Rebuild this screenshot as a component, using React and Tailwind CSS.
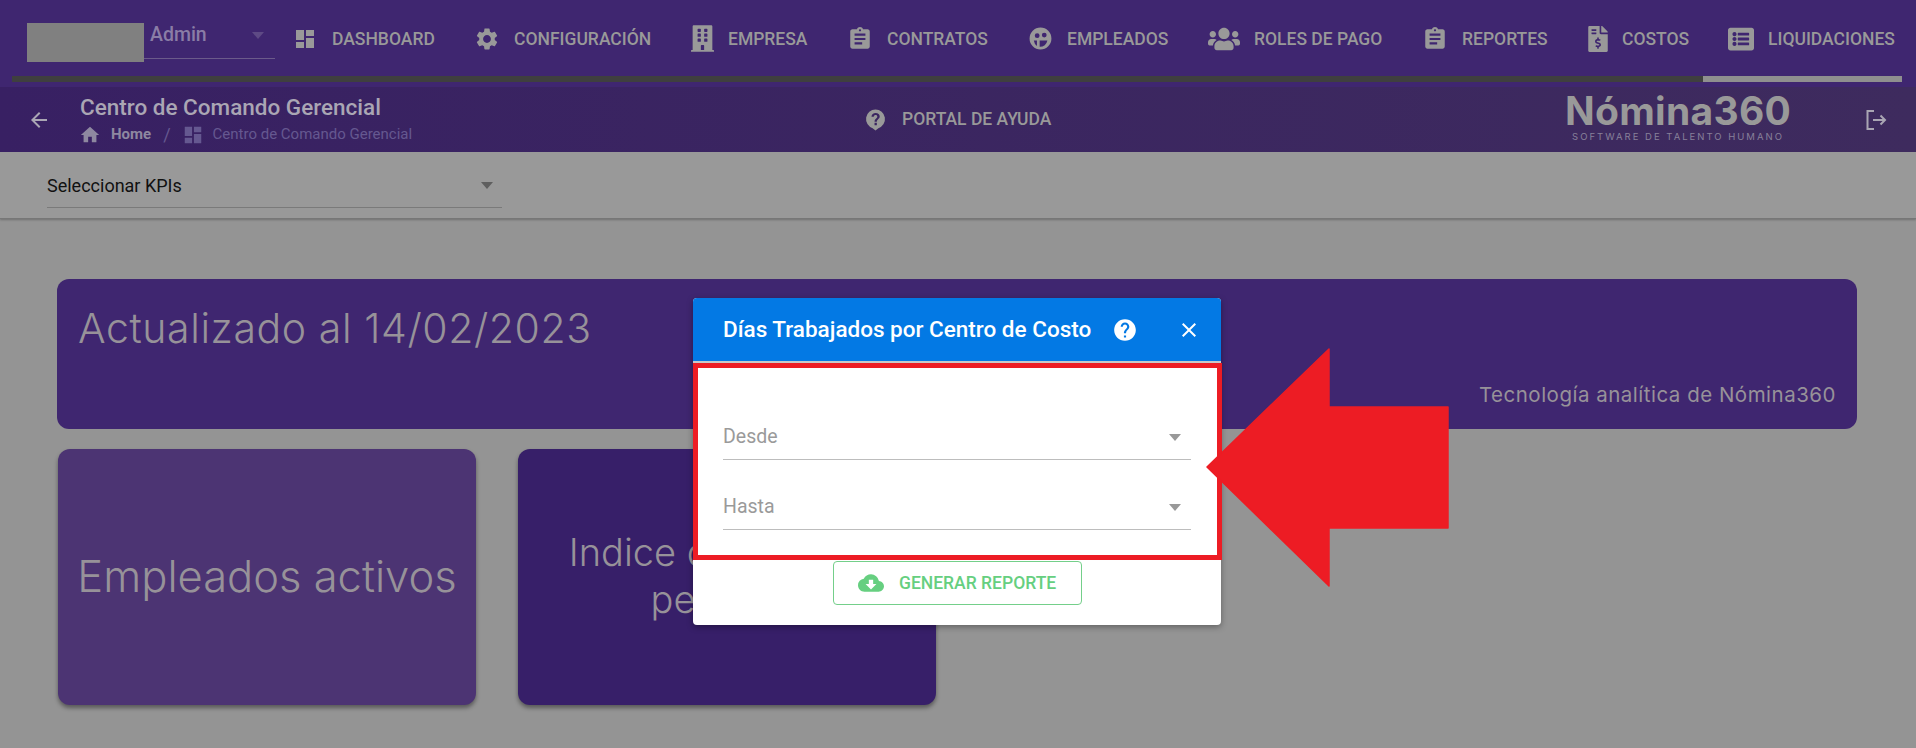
import React from "react";
import { MdDashboard, MdSettings, MdAssignment, MdHome, MdArrowBack, MdClose, MdHelp, MdCloudDownload } from "react-icons/md";
import { FaBuilding, FaUsers, FaFileInvoiceDollar, FaListAlt } from "react-icons/fa";

function FaceIcon({ className }) {
  return (
    <svg viewBox="0 0 24 24" className={className} fill="currentColor">
      <path fillRule="evenodd" d="M12 1.5a10.5 10.5 0 1 0 0 21 10.5 10.5 0 0 0 0-21zM8.8 7a2.3 2.3 0 1 1 0 4.6 2.3 2.3 0 0 1 0-4.6zm6.8-.6a2.3 2.3 0 1 1 0 4.6 2.3 2.3 0 0 1 0-4.6zM5.6 14h3v5.2A7.6 7.6 0 0 1 5.6 14zm5.6 0h7.4a7.2 7.2 0 0 1-7.4 6z" />
    </svg>
  );
}

function HelpBubble({ className }) {
  return (
    <svg viewBox="0 0 24 24" className={className} fill="currentColor">
      <path fillRule="evenodd" d="M12 1.5a10 10 0 0 0-3 19.5l3 2.5 3-2.5a10 10 0 0 0-3-19.5zM11 15.5h2.4v2.4H11zM12.2 5.2c2.4 0 4.2 1.5 4.2 3.7 0 2.6-3 2.9-3 5.4H11c0-3.4 2.9-3.4 2.9-5.3 0-.9-.7-1.6-1.8-1.6-1 0-1.8.7-1.9 1.8H7.8c.1-2.4 1.9-4 4.4-4z" />
    </svg>
  );
}

function SelectArrow({ className }) {
  return <span className={`w-0 h-0 border-x-[6px] border-x-transparent border-t-[7px] ${className}`} />;
}

const tabs = [
  { label: "DASHBOARD", Icon: MdDashboard, box: "w-[180px]", iconBox: "w-[36px]", icon: "w-[24px] h-[24px] -ml-[3px]" },
  { label: "CONFIGURACIÓN", Icon: MdSettings, box: "w-[215px]", iconBox: "w-[38px]", icon: "w-[26px] h-[26px] -ml-[2px]" },
  { label: "EMPRESA", Icon: FaBuilding, box: "w-[159px]", iconBox: "w-[37px]", icon: "w-[23px] h-[27px]" },
  { label: "CONTRATOS", Icon: MdAssignment, box: "w-[179px]", iconBox: "w-[37px]", icon: "w-[26px] h-[26px] -ml-[3px]" },
  { label: "EMPLEADOS", Icon: FaceIcon, box: "w-[179px]", iconBox: "w-[38px]", icon: "w-[25px] h-[25px] -ml-[1px]" },
  { label: "ROLES DE PAGO", Icon: FaUsers, box: "w-[217px]", iconBox: "w-[46px]", icon: "w-[32px] h-[26px]" },
  { label: "REPORTES", Icon: MdAssignment, box: "w-[163px]", iconBox: "w-[37px]", icon: "w-[26px] h-[26px] -ml-[3px]" },
  { label: "COSTOS", Icon: FaFileInvoiceDollar, box: "w-[140px]", iconBox: "w-[34px]", icon: "w-[20px] h-[26px]" },
  { label: "LIQUIDACIONES", Icon: FaListAlt, box: "w-[175px]", iconBox: "w-[40px]", icon: "w-[26px] h-[26px]" },
];

export default function App() {
  return (
    <div className="relative w-[1916px] h-[748px] overflow-hidden bg-[#949494] font-['Roboto',sans-serif]">
      {/* top bar */}
      <header className="h-[87px] bg-[#3f2670] flex flex-col">
        <div className="h-[76px] flex items-start pl-[27px]">
          <div className="w-[117px] h-[39px] mt-[23px] bg-[#808080] shrink-0" />
          <div className="w-[131px] h-[36px] mt-[23px] border-b border-[#6b5a8a] flex items-start justify-between pl-[6px] pr-[11px] shrink-0">
            <span className="text-[19.5px] leading-[24px] font-medium text-[#8a7da6]">Admin</span>
            <SelectArrow className="mt-[9px] border-t-[#5e4a85]" />
          </div>
          <nav className="flex items-center h-[76px] ml-[21px] pt-[1px]">
            {tabs.map(({ label, Icon, box, iconBox, icon }) => (
              <div key={label} className={`${box} flex items-center shrink-0 text-[#999999]`}>
                <span className={`${iconBox} flex items-center shrink-0`}>
                  <Icon className={icon} />
                </span>
                <span className="text-[17.5px] leading-[20px] font-medium whitespace-nowrap">{label}</span>
              </div>
            ))}
          </nav>
        </div>
        <div className="h-[6px] ml-[12px] mr-[14px] bg-[#3f3f3f] flex justify-end">
          <div className="w-[199px] h-[6px] bg-[#8f8f8f]" />
        </div>
      </header>

      {/* sub bar */}
      <div className="h-[65px] bg-gradient-to-r from-[#382063] to-[#3e2b5e] flex items-center text-[#a9a5b3] relative">
        <MdArrowBack className="w-[24px] h-[24px] ml-[27px] text-[#aaa6b4] shrink-0" />
        <div className="ml-[29px] w-[786px] shrink-0">
          <div className="text-[22.5px] leading-[26px] mb-[4px] font-medium text-[#aaa6b4] whitespace-nowrap">Centro de Comando Gerencial</div>
          <div className="flex items-center h-[22px] text-[15px] whitespace-nowrap">
            <MdHome className="w-[22px] h-[22px] -ml-[1px] text-[#8e88a0]" />
            <span className="ml-[10px] font-bold text-[#8e88a0]">Home</span>
            <span className="ml-[12px] text-[#655890] text-[18px]">/</span>
            <MdDashboard className="w-[22px] h-[22px] ml-[11px] text-[#655890]" />
            <span className="ml-[9px] text-[#655890]">Centro de Comando Gerencial</span>
          </div>
        </div>
        <HelpBubble className="w-[23px] h-[25px] -ml-[2px] text-[#999999] shrink-0" />
        <span className="ml-[15px] w-[665px] shrink-0 text-[17.5px] font-medium text-[#999999] whitespace-nowrap">PORTAL DE AYUDA</span>
        <div className="w-[222px] shrink-0 flex flex-col items-center text-[#999999] font-['Inter',sans-serif] pb-[6px]">
          <span className="text-[39px] leading-[40px] font-bold tracking-[0.3px] whitespace-nowrap">Nómina360</span>
          <span className="text-[9.5px] leading-[12px] tracking-[2px] text-[#87809a] whitespace-nowrap">SOFTWARE DE TALENTO HUMANO</span>
        </div>
        <svg viewBox="0 0 24 24" className="w-[24px] h-[24px] ml-[75px] text-[#a9a5b3]" fill="none" stroke="currentColor" strokeWidth="2">
          <path d="M10 3H3.5v18H10M9 12h12M16.5 7.5 21 12l-4.5 4.5" />
        </svg>
      </div>

      {/* KPI filter */}
      <div className="h-[67px] bg-[#999999] border-b border-[#777777] shadow-[0_1px_2px_rgba(0,0,0,0.25)] pl-[47px]">
        <div className="w-[455px] h-[56px] border-b border-[#7a7a7a] flex items-center justify-between pr-[9px] pt-[11px]">
          <span className="text-[18px] text-[#111111]">Seleccionar KPIs</span>
          <SelectArrow className="border-t-[#5f5f5f]" />
        </div>
      </div>

      {/* content */}
      <main className="pl-[57px] pt-[60px] font-['Inter',sans-serif] text-[#979299]">
        <section className="w-[1800px] h-[150px] rounded-[12px] bg-[#3f2670] px-[21px] pt-[23px] pb-[21px] flex flex-col justify-between">
          <div className="text-[41px] leading-[52px] font-light tracking-[0.6px] whitespace-nowrap">Actualizado al 14/02/2023</div>
          <div className="text-[20.5px] leading-[26px] tracking-[0.5px] text-right whitespace-nowrap">Tecnología analítica de Nómina360</div>
        </section>
        <div className="flex gap-[42px] mt-[20px] ml-[1px]">
          <div className="w-[418px] h-[256px] rounded-[12px] bg-[#4c3473] shadow-[0_3px_4px_rgba(0,0,0,0.4)] flex items-center justify-center text-[43.5px] font-light whitespace-nowrap">
            Empleados activos
          </div>
          <div className="w-[418px] h-[256px] rounded-[12px] bg-[#371f69] shadow-[0_3px_4px_rgba(0,0,0,0.4)] flex items-center justify-center text-center text-[38px] leading-[47px] pb-[2px] font-light">
            <span>Indice de rotación<br />personal</span>
          </div>
        </div>
      </main>

      {/* dialog */}
      <div className="absolute left-[693px] top-[298px] w-[528px] h-[327px] bg-white rounded-[4px] shadow-[0_2px_6px_rgba(0,0,0,0.35)] flex flex-col">
        <div className="h-[63px] bg-[#0379e4] rounded-t-[4px] flex items-center pl-[30px] text-white">
          <span className="text-[22.5px] font-medium w-[391px] whitespace-nowrap">Días Trabajados por Centro de Costo</span>
          <MdHelp className="w-[26px] h-[26px] -ml-[2px]" />
          <MdClose className="w-[24px] h-[24px] ml-[39px]" />
        </div>
        <div className="h-[2px] bg-[#c8c8c8]" />
        <div className="w-[529px] h-[197px] border-[5px] border-[#ed1c24] pl-[25px] pr-[26px] pt-[48px] bg-white">
          <div className="h-[44px] border-b border-[#bdbdbd] flex items-center justify-between pr-[10px] pb-[1px]">
            <span className="text-[19.5px] text-[#9a9a9a]">Desde</span>
            <SelectArrow className="border-t-[#999999]" />
          </div>
          <div className="h-[44px] mt-[26px] border-b border-[#bdbdbd] flex items-center justify-between pr-[10px] pb-[1px]">
            <span className="text-[19.5px] text-[#9a9a9a]">Hasta</span>
            <SelectArrow className="border-t-[#999999]" />
          </div>
        </div>
        <button className="ml-[140px] mt-[1px] w-[249px] h-[44px] border border-[#74cf8a] rounded-[4px] flex items-center pl-[24px] bg-white text-[#66cf80]">
          <MdCloudDownload className="w-[26px] h-[26px]" />
          <span className="ml-[15px] text-[17.5px] font-medium whitespace-nowrap">GENERAR REPORTE</span>
        </button>
      </div>

      {/* annotation arrow */}
      <svg className="absolute left-[1200px] top-[340px] w-[255px] h-[255px]" viewBox="1200 340 255 255">
        <path d="M1207 467 1329 349V407H1448V528H1329V586Z" fill="#ed1c24" stroke="#ed1c24" strokeWidth="1.5" strokeLinejoin="round" />
      </svg>
    </div>
  );
}
